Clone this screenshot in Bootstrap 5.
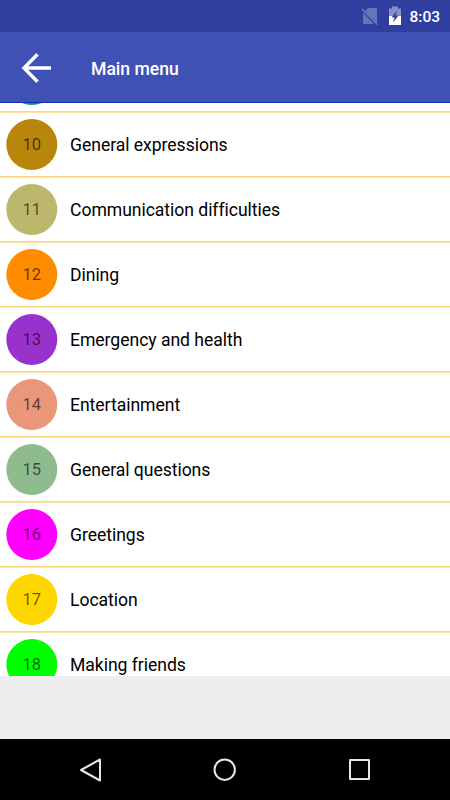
<!DOCTYPE html>
<html lang="en">
<head>
<meta charset="utf-8">
<meta name="viewport" content="width=device-width, initial-scale=1">
<title>Main menu</title>
<link href="https://cdn.jsdelivr.net/npm/bootstrap@5.3.0/dist/css/bootstrap.min.css" rel="stylesheet">
<style>
  body { font-family: Roboto, "Liberation Sans", sans-serif; background: #eee; color: #000; }
  .phone { width: 450px; height: 800px; }
  .status { height: 32px; background: #303f9f; padding-right: 10px; font-size: 15.5px; line-height: 32px; }
  .clock { margin-left: 5px; padding-top: 1px; }
  .appbar { height: 71px; background: #3f51b5; border-bottom: 1px solid #0a2fb3; padding: 2px 0 0 20px; }
  .appbar h1 { font-size: 17.6px; margin-left: 40px; line-height: 24px; padding-top: 2px; }
  .topics { height: 573px; }
  .topic { height: 65px; padding: 0 0 1px 6px; font-size: 17.6px; letter-spacing: -.05px; font-variant-ligatures: none; background: linear-gradient(#ffd67b, #ffd67b) 0 63px / 100% 1px no-repeat, linear-gradient(#ffe4a6, #ffe4a6) 0 64px / 100% 1px no-repeat; }
  .topic:first-child { margin-top: -55px; }
  .disc { width: 51px; height: 51px; margin: 0 13px 1px 0; padding-top: 2px; color: rgba(0,0,0,.6); font-size: 16.5px; transform: translateX(.3px); }
  .sysnav { height: 61px; padding: 0 79px; }
</style>
<script src="https://cdn.jsdelivr.net/npm/bootstrap@5.3.0/dist/js/bootstrap.bundle.min.js"></script>
</head>
<body>
<div class="phone d-flex flex-column overflow-hidden">
  <div class="status d-flex align-items-center justify-content-end text-white flex-shrink-0">
    <svg width="44" height="22" viewBox="0 0 44 22">
      <path d="M8 3h8q1 0 1 1v14q0 1-1 1H4q-1 0-1-1V8z" fill="#6a75b9"/>
      <path d="M1 3.500L17 20" stroke="#303f9f" stroke-width="3"/>
      <path d="M2 4L17.500 19.500" stroke="#7983c1" stroke-width="1.300"/>
      <path d="M29 3.500h3V1.500h6v2h3V11H29z" fill="#8790c8"/>
      <path d="M29 11h12v9H29z" fill="#fff"/>
      <path d="M37 5.500l-5.500 7h3l-1.500 5 5.500-7h-3z" fill="#303f9f"/>
    </svg>
    <span class="clock fw-medium">8:03</span>
  </div>
  <header class="appbar d-flex align-items-center text-white flex-shrink-0">
    <svg width="31" height="32" viewBox="0 0 31 32" fill="none" stroke="#fff" stroke-width="3.400">
      <path d="M17.500 2.300L4 16l13.500 13.700M4 16h27" stroke-linejoin="miter"/>
    </svg>
    <h1 class="fw-medium mb-0">Main menu</h1>
  </header>
  <main class="topics bg-white overflow-hidden flex-shrink-0">
    <div class="topic d-flex align-items-center"><span class="disc rounded-circle d-flex align-items-center justify-content-center" style="background:#009688"></span></div>
    <div class="topic d-flex align-items-center"><span class="disc rounded-circle d-flex align-items-center justify-content-center" style="background:#b8860b">10</span>General expressions</div>
    <div class="topic d-flex align-items-center"><span class="disc rounded-circle d-flex align-items-center justify-content-center" style="background:#bdb76b">11</span>Communication difficulties</div>
    <div class="topic d-flex align-items-center"><span class="disc rounded-circle d-flex align-items-center justify-content-center" style="background:#ff8c00">12</span>Dining</div>
    <div class="topic d-flex align-items-center"><span class="disc rounded-circle d-flex align-items-center justify-content-center" style="background:#9932cc">13</span>Emergency and health</div>
    <div class="topic d-flex align-items-center"><span class="disc rounded-circle d-flex align-items-center justify-content-center" style="background:#e9967a">14</span>Entertainment</div>
    <div class="topic d-flex align-items-center"><span class="disc rounded-circle d-flex align-items-center justify-content-center" style="background:#8fbc8f">15</span>General questions</div>
    <div class="topic d-flex align-items-center"><span class="disc rounded-circle d-flex align-items-center justify-content-center" style="background:#ff00ff">16</span>Greetings</div>
    <div class="topic d-flex align-items-center"><span class="disc rounded-circle d-flex align-items-center justify-content-center" style="background:#ffd700">17</span>Location</div>
    <div class="topic d-flex align-items-center"><span class="disc rounded-circle d-flex align-items-center justify-content-center" style="background:#00ff00">18</span>Making friends</div>
  </main>
  <nav class="sysnav bg-black d-flex align-items-center justify-content-between mt-auto flex-shrink-0">
    <svg width="24" height="26" viewBox="0 0 24 26" fill="none" stroke="#e6e6e6" stroke-width="2" stroke-linejoin="round"><path d="M21 2.500v21L2 13z"/></svg>
    <svg width="24" height="26" viewBox="0 0 24 26" fill="none" stroke="#e6e6e6" stroke-width="2"><circle cx="11.700" cy="12.700" r="10.200"/></svg>
    <svg width="24" height="26" viewBox="0 0 24 26" fill="none" stroke="#e6e6e6" stroke-width="2" stroke-linejoin="round"><path d="M3 3h19v19H3z"/></svg>
  </nav>
</div>
</body>
</html>
